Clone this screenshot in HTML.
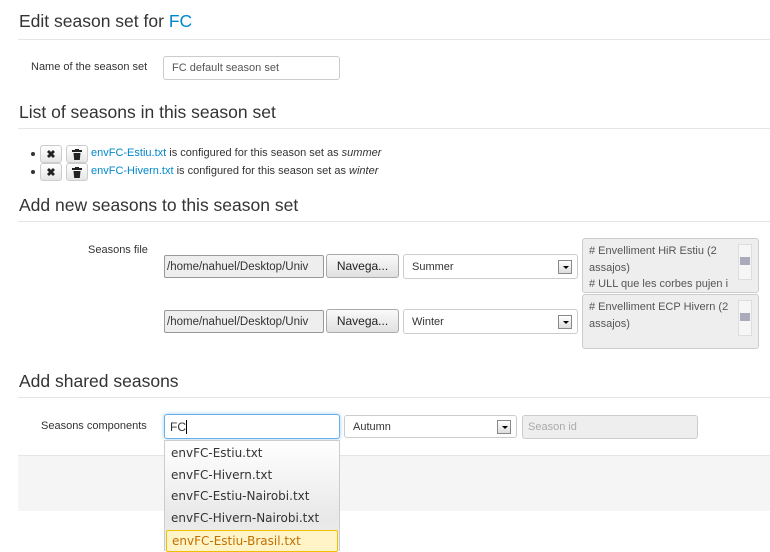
<!DOCTYPE html>
<html><head><meta charset="utf-8"><style>
*{box-sizing:border-box;margin:0;padding:0}
body{width:770px;height:551px;overflow:hidden;background:#fff;font-family:"Liberation Sans",sans-serif;color:#333;position:relative;font-size:11px}
.a{position:absolute}
h2{position:absolute;left:19px;font-weight:normal;font-size:17.5px;color:#333;white-space:nowrap}
.rule{position:absolute;left:18px;right:0;height:1px;background:#e5e5e5}
.inp{position:absolute;border:1px solid #ccc;border-radius:3px;background:#fff;padding:0 8px;display:flex;align-items:center;font-size:11px;color:#555;white-space:nowrap;overflow:hidden}
.file{position:absolute;border:1px solid #999;background:#eee;border-radius:2px;font-size:11.5px;color:#333;padding-left:2px;display:flex;align-items:center;overflow:hidden;white-space:nowrap}
.btn{position:absolute;border:1px solid #aaa;border-radius:3px;background:linear-gradient(#fafafa,#e0e0e0);font-size:12px;color:#222;display:flex;align-items:center;justify-content:center}
.sel{position:absolute;border:1px solid #ccc;border-radius:3px;background:#fff;font-size:11px;color:#333;padding-left:8px;display:flex;align-items:center}
.sel i{position:absolute;right:5px;top:50%;margin-top:-7px;width:14px;height:14px;border:1px solid #888;background:linear-gradient(#fff,#ddd);font-style:normal}
.sel i:after{content:"";position:absolute;left:4px;top:5px;border:3px solid transparent;border-top:3px solid #000}
.ta{position:absolute;border:1px solid #ccc;border-radius:3px;background:#eee;font-size:11px;color:#555;padding:4px 6px;line-height:16.5px}
.sb{position:absolute;right:6px;top:5px;width:14px;height:36px;border:1px solid #ddd;background:#f6f6f6}
.sb b{position:absolute;left:1px;top:12px;width:10px;height:8px;background:#aab}
.ib{position:absolute;width:22px;height:18px;border:1px solid #ccc;border-radius:3px;background:linear-gradient(#fff,#e6e6e6);display:flex;align-items:center;justify-content:center;font-size:11px;font-weight:bold;color:#222}
.dot{position:absolute;left:31px;width:4px;height:4px;border-radius:50%;background:#333}
.dd{position:absolute;left:164px;top:440px;width:176px;height:111px;border:1px solid #ccc;border-bottom:0;background:linear-gradient(#fff,#e8e8e8 70%,#eee);font-family:"DejaVu Sans",sans-serif;font-size:12px;color:#333;padding-top:2px}
.dd div{height:21.7px;line-height:21px;padding-left:6px}
a{color:#0088cc;text-decoration:none}
</style></head><body>
<h2 style="top:11px">Edit season set for <span style="color:#0088cc">FC</span></h2>
<div class="rule" style="top:39px"></div>
<div class="a" style="left:31px;top:61px">Name of the season set</div>
<div class="inp" style="left:163px;top:56px;width:177px;height:24px">FC default season set</div>
<h2 style="top:102px">List of seasons in this season set</h2>
<div class="rule" style="top:128px"></div>
<div class="dot" style="top:152px"></div>
<div class="ib" style="left:40px;top:145px">✖</div>
<div class="ib" style="left:66px;top:145px"><svg width="10" height="11" viewBox="0 0 10 11"><rect x="0" y="1" width="10" height="2" fill="#222"/><rect x="3" y="0" width="4" height="1" fill="#222"/><path d="M1.5 4h7l-.7 7h-5.6z" fill="#222"/></svg></div>
<div class="a" style="left:91px;top:147px;white-space:nowrap"><a>envFC-Estiu.txt</a> is configured for this season set as <i>summer</i></div>
<div class="dot" style="top:170px"></div>
<div class="ib" style="left:40px;top:163px">✖</div>
<div class="ib" style="left:66px;top:163px"><svg width="10" height="11" viewBox="0 0 10 11"><rect x="0" y="1" width="10" height="2" fill="#222"/><rect x="3" y="0" width="4" height="1" fill="#222"/><path d="M1.5 4h7l-.7 7h-5.6z" fill="#222"/></svg></div>
<div class="a" style="left:91px;top:165px;white-space:nowrap"><a>envFC-Hivern.txt</a> is configured for this season set as <i>winter</i></div>
<h2 style="top:195px">Add new seasons to this season set</h2>
<div class="rule" style="top:221px"></div>
<div class="a" style="left:88px;top:244px">Seasons file</div>

<div class="file" style="left:164px;top:255px;width:160px;height:23px">/home/nahuel/Desktop/Univ</div>
<div class="btn" style="left:326px;top:254px;width:73px;height:24px">Navega...</div>
<div class="sel" style="left:403px;top:254px;width:175px;height:25px">Summer<i></i></div>
<div class="ta" style="left:582px;top:238px;width:177px;height:55px"># Envelliment HiR Estiu (2<br>assajos)<br># ULL que les corbes pujen i<div class="sb"><b></b></div></div>

<div class="file" style="left:164px;top:310px;width:160px;height:23px">/home/nahuel/Desktop/Univ</div>
<div class="btn" style="left:326px;top:309px;width:73px;height:24px">Navega...</div>
<div class="sel" style="left:403px;top:309px;width:175px;height:25px">Winter<i></i></div>
<div class="ta" style="left:582px;top:294px;width:177px;height:55px"># Envelliment ECP Hivern (2<br>assajos)<div class="sb"><b></b></div></div>

<h2 style="top:371px">Add shared seasons</h2>
<div class="rule" style="top:397px"></div>
<div class="a" style="left:41px;top:420px">Seasons components</div>
<div class="a" style="left:18px;right:0;top:455px;height:56px;background:#f5f5f5;border-top:1px solid #e5e5e5"></div>
<div class="inp" style="left:164px;top:414px;width:176px;height:25px;border-color:#66afe9;box-shadow:0 0 4px rgba(102,175,233,.6);color:#333;font-size:12px;padding-left:5px">FC<span style="border-left:1px solid #000;height:14px"></span></div>
<div class="sel" style="left:344px;top:415px;width:173px;height:23px">Autumn<i></i></div>
<div class="inp" style="left:522px;top:415px;width:176px;height:24px;background:#eee;color:#aaa;padding-left:5px">Season id</div>
<div class="dd">
<div>envFC-Estiu.txt</div>
<div>envFC-Hivern.txt</div>
<div>envFC-Estiu-Nairobi.txt</div>
<div>envFC-Hivern-Nairobi.txt</div>
<div style="margin:0 1px;padding-left:5px;border:1px solid #f0c000;border-radius:2px;background:#fff3c8;color:#c07000;height:22px;line-height:20px">envFC-Estiu-Brasil.txt</div>
</div>
</body></html>
